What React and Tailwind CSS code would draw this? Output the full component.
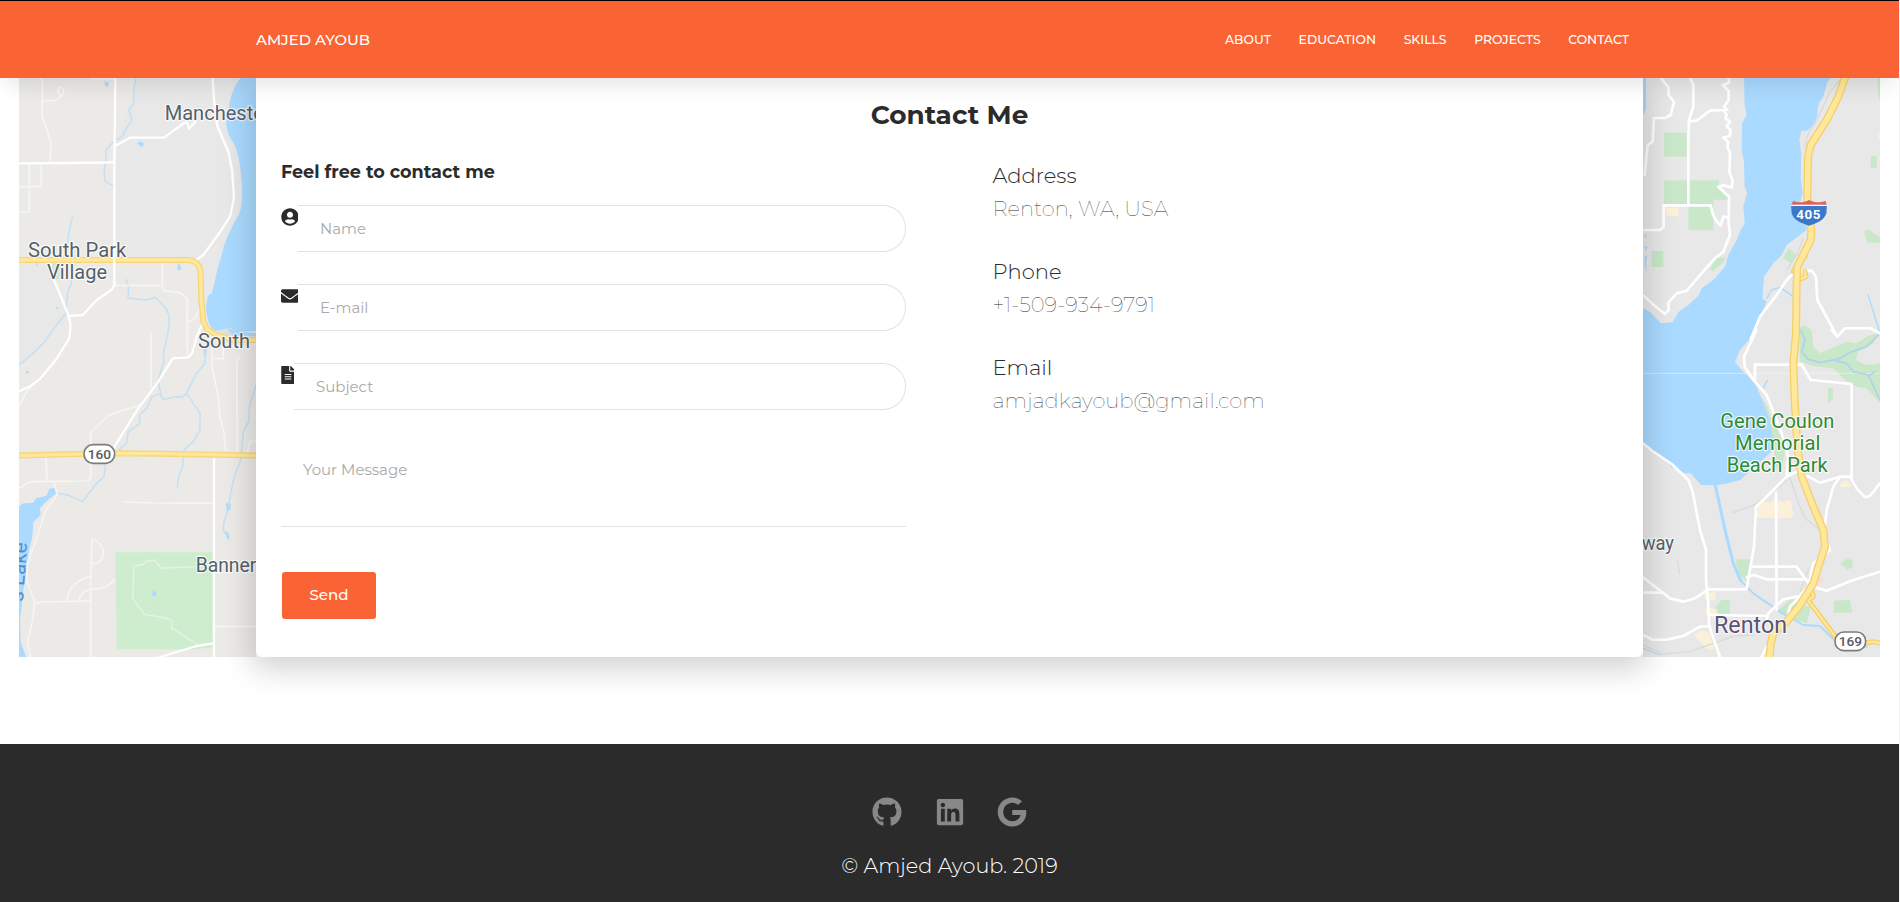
import { FaUserCircle, FaEnvelope, FaFileAlt, FaGithub, FaLinkedin, FaGoogle } from 'react-icons/fa';

const NAV = ['ABOUT', 'EDUCATION', 'SKILLS', 'PROJECTS', 'CONTACT'];

const DETAILS = [
  ['Address', 'Renton, WA, USA'],
  ['Phone', '+1-509-934-9791'],
  ['Email', 'amjadkayoub@gmail.com'],
];

const LAND = '#ebeae6';
const TOWN = '#e8e8e8';
const WATER = '#aadaff';
const PARK = '#c9e7c9';

function Roads({ paths, color = '#ffffff', width = 7 }) {
  return (
    <g fill="none" stroke={color} strokeWidth={width} strokeLinejoin="round" strokeLinecap="round">
      {paths.map((d) => (
        <path key={d} d={d} />
      ))}
    </g>
  );
}

function Highways({ paths, outer = '#f7d57b', width = 18 }) {
  return (
    <>
      <Roads paths={paths} color={outer} width={width} />
      <Roads paths={paths} color="#ffe899" width={width - 8} />
    </>
  );
}

function Label({ x, y, w, size = 62, color = '#56606b', children, ...rest }) {
  return (
    <text
      x={x}
      y={y}
      textLength={w}
      lengthAdjust="spacingAndGlyphs"
      fontSize={size}
      fontWeight="450"
      fill={color}
      stroke="#ffffff"
      strokeWidth="7"
      strokeOpacity="0.8"
      strokeLinejoin="round"
      paintOrder="stroke"
      fontFamily="Roboto, sans-serif"
      {...rest}
    >
      {children}
    </text>
  );
}

function RouteBadge({ x, y, children }) {
  return (
    <g>
      <rect x={x - 46} y={y - 28} width="92" height="56" rx="27" fill="#ffffff" stroke="#7d7d7d" strokeWidth="5" />
      <text x={x} y={y + 15} textAnchor="middle" fontFamily="Roboto, sans-serif" fontWeight="500" fontSize="41" fill="#5a5a5a">
        {children}
      </text>
    </g>
  );
}

function WestMap() {
  return (
    <svg className="block h-[579px] w-[237px] shrink-0" viewBox="57 234 711 1737" preserveAspectRatio="none">
      <rect x="57" y="234" width="711" height="1737" fill={LAND} />
      <path d="M408 234 L396 290 L380 340 L347 436 V770 H570 L600 785 L625 760 L768 620 V234Z" fill={TOWN} />
      <path d="M57 790 H150 L205 950 L140 1020 L57 1100Z" fill={TOWN} />
      <path d="M600 785 L640 760 L720 640 L640 850 L620 930 L625 985 L606 960Z" fill={TOWN} />
      <path d="M640 985 L700 985 L768 1000 V1016 H680Z" fill="#e0e0de" />
      <path d="M155 790 H185 L178 838 H163Z" fill="#cfe8cb" />
      <path d="M346 1657 H638 V1942 L590 1948 H350Z" fill="#ceedcf" />
      <path d="M722 234 C700 262 690 290 684 340 C672 370 682 400 698 425 C716 450 722 500 726 560 C728 610 722 640 710 655 C690 690 672 730 664 770 C650 810 646 840 636 878 L624 888 L618 920 C620 960 630 985 645 992 L690 984 L712 996 L768 992 V234Z" fill={WATER} />
      <path d="M680 985 L720 996 L768 1000 V1008 L700 1008Z" fill={WATER} />
      <path d="M57 1520 L70 1510 L100 1508 L108 1495 L140 1487 L148 1466 L163 1464 L168 1480 L138 1505 L120 1524 L122 1545 L100 1566 L97 1610 L85 1660 L82 1700 L70 1770 L60 1860 L62 1925 L78 1971 H57Z" fill={WATER} />
      <path d="M313 244 L326 248 L324 262 L316 258Z M411 430 L424 424 L432 432 L426 442Z M535 786 L545 808 L532 810Z M610 1040 L620 1048 L618 1072 L611 1062Z M678 1508 L692 1512 L690 1530 L680 1536Z M676 1594 L686 1600 L688 1620 L678 1612Z M460 1770 L470 1778 L464 1792 L456 1784Z M472 1800 L476 1812 L473 1810Z M78 1114 H86 V1120 H78Z M168 920 L176 926 L170 928Z M106 790 H112 V802Z" fill={WATER} />
      <Roads
        color="#c3e0f5"
        width={4.5}
        paths={[
          'M408 236 L401 270 L402 310 L386 330 L396 360 L376 390 L366 412 L345 420 L318 450 L317 490 L312 515 L316 545 L345 560',
          'M217 652 L206 700 L200 760 L218 800 L214 850 L202 880 L198 940 L165 980 L135 1025 L100 1060 L57 1095',
          'M377 838 L386 860 L384 895 L440 900 L466 892 L498 925 L508 950 L504 1000 L490 1060 L492 1085 L474 1140 L482 1180 L456 1190 L440 1225 L418 1245 L420 1270 L385 1295 L380 1328 L356 1350',
          'M480 1182 L490 1198 L530 1190 L545 1192 L560 1180 L600 1240 L600 1290 L580 1325 L552 1350 L548 1400 L536 1430 L532 1460',
          'M560 1178 L590 1120 L615 1090 L614 1040',
          'M768 1155 L748 1220 L746 1265 L730 1295 L722 1380 L703 1430 L690 1490 L684 1530 L672 1565 L670 1590 L682 1610',
          'M317 1395 L312 1430 L290 1450 L248 1504 L200 1484 L170 1480',
        ]}
      />
      <Roads
        color="#f6f5f3"
        width={5}
        paths={[
          'M122 234 L128 248 L126 350 L143 395 L154 432 L149 487',
          'M126 302 H168 L188 284 C198 262 172 252 174 275 L184 290',
          'M88 490 L88 636 H57',
          'M124 490 V560 H57',
          'M272 236 H345',
          'M487 790 V856 H345',
          'M487 856 L492 872 L540 878 L562 896 V1062',
          'M562 968 L585 955 L600 925',
          'M453 1000 V1162',
          'M420 1215 L326 1246 L295 1275 L272 1298 V1435 L262 1443 L90 1445 L57 1465',
          'M138 1370 L141 1443',
          'M57 1218 L80 1175 L94 1160',
          'M163 1447 L172 1485 L138 1530 L108 1620 L82 1690 L80 1740 L104 1805 L98 1860 L82 1930 L92 1971',
          'M104 1806 L114 1810 L118 1806 L270 1803',
          'M276 1620 L272 1730 L272 1971',
          'M276 1617 C300 1625 312 1645 310 1662 C306 1685 292 1693 276 1690',
          'M202 1803 C200 1770 230 1738 275 1728',
          'M236 1803 C240 1775 262 1764 300 1766 C325 1758 338 1748 346 1738',
          'M376 1506 L460 1509 L636 1510',
          'M636 1020 V1100 L655 1190 L660 1250 L672 1300 L677 1350',
          'M636 1075 L670 1076 V1040 H740',
          'M720 1072 L710 1078 L712 1356',
          'M742 1358 L750 1324 H768',
          'M642 1880 H768',
        ]}
      />
      <Roads
        color="#e3f3e2"
        width={4.5}
        paths={['M582 1700 L484 1705 L464 1681 L440 1684 L430 1693 L402 1698 L398 1795 L432 1843 L494 1853 L515 1860 L515 1884 L560 1912 L590 1932']}
      />
      <Roads
        paths={[
          'M346 234 L343 490 V855 L334 870 L290 900 L248 945 L208 948',
          'M57 490 L210 489 L343 487',
          'M345 438 L390 413 H492 L552 369 L562 368 L567 386 L586 366',
          'M638 234 L642 300 L652 378 L685 455 L696 510 L702 594 L690 650 L664 690 L610 765 L585 782',
          'M150 785 L158 830 L205 945 L212 975 L208 1015 L170 1076 L122 1135 L92 1158 L57 1174',
          'M610 965 L590 1010 L577 1058 L565 1072 L518 1075 L475 1145 L415 1225 L340 1345',
          'M642 1366 V1971',
          'M638 1930 L590 1938 L480 1971',
        ]}
      />
      <Highways
        paths={['M50 780 H345 H560 C585 782 600 790 602 820 L604 900 L610 965 L622 988 L650 1006 L700 1020 L768 1020', 'M50 1367 L200 1363 L350 1360 L480 1361 L640 1364 L780 1367']}
      />
      <Roads color="#ffffff" width={6} paths={['M343 765 V800']} />
      <RouteBadge x={298} y={1362}>160</RouteBadge>
      <Label x={494} y={360} w={318}>Manchester</Label>
      <Label x={84} y={770} w={295}>South Park</Label>
      <Label x={141} y={837} w={180}>Village</Label>
      <Label x={594} y={1043} w={156}>South</Label>
      <Label x={587} y={1717} w={182}>Banner</Label>
      <text transform="translate(69 1806) rotate(-86)" textLength="178" lengthAdjust="spacingAndGlyphs" fontFamily="Roboto, sans-serif" fontSize="58" fill="#4f8fd0">
        s Lake
      </text>
    </svg>
  );
}

function EastMap() {
  return (
    <svg className="block h-[579px] w-[237px] shrink-0" viewBox="129 234 711 1737" preserveAspectRatio="none">
      <rect x="129" y="234" width="711" height="1737" fill={TOWN} />
      <path d="M432 234 L434 315 L440 345 L426 370 L425 455 L432 480 L434 560 L442 578 L430 620 L434 670 L422 690 L410 720 L385 765 L375 800 L340 840 L305 865 L297 885 L262 918 L236 935 L218 967 L183 970 L150 935 L129 925 V1326 L160 1355 L195 1375 L215 1402 L255 1420 L272 1420 L303 1455 L345 1456 L375 1452 L420 1440 L470 1395 L520 1350 L522 1290 L505 1230 L485 1195 L465 1150 L425 1110 L405 1085 L420 1050 L452 1015 L480 950 L500 905 L487 895 L492 830 L520 790 L545 765 L560 735 L600 705 L620 690 L615 650 L600 610 L608 580 L602 530 L604 460 L598 420 L604 392 L620 392 L648 370 L656 310 L670 290 L682 245 L694 234Z" fill={WATER} />
      <path d="M129 234 H138 V325 L132 342 H129Z" fill={WATER} />
      <path d="M134 700 L142 712 H134Z M134 738 L144 740 L136 754Z M134 770 L142 766 L138 790 L140 815 L134 800Z" fill={WATER} />
      <g fill={PARK}>
        <path d="M192 398 H260 V470 H192Z M192 541 H356 V566 L384 590 V599 H340 V690 H265 V612 H192Z M154 753 H190 V801 H154Z M345 775 L377 772 L368 790 L340 812 L330 810Z M566 745 L592 765 L574 791 L549 773Z M812 468 H830 V504 H812Z M832 234 H840 V305 L833 280Z M792 695 L808 688 L820 700 L840 712 V728 H803Z" />
        <path d="M598 985 L612 975 L635 990 L640 1040 L660 1060 L740 1025 L770 1030 L800 1010 L830 1000 L820 1030 L775 1055 L768 1080 L800 1095 L840 1090 V1208 L800 1165 L770 1160 L735 1140 L700 1105 L640 1098 L600 1085Z" />
        <path d="M684 1163 H698 V1200 L684 1208Z M485 1195 L505 1225 L512 1260 L545 1310 L555 1350 L545 1410 L525 1400 L522 1330 L508 1260Z M408 1678 H454 L440 1745 L412 1715Z M345 1825 L365 1800 H390 V1848 L355 1840Z M530 1835 L575 1795 L600 1815 L632 1820 L620 1870 L560 1850Z M720 1690 L740 1676 L758 1680 V1700 L742 1709Z M702 1802 L750 1800 L757 1838 H702Z" />
      </g>
      <g fill="#fbf1d8">
        <path d="M195 623 H236 V650 L202 646Z M470 1550 L478 1500 L510 1508 L522 1498 L545 1505 L572 1500 L580 1545 L570 1554 H475Z M720 1452 L738 1440 L755 1455 L748 1462 L722 1460Z M312 1780 L345 1775 L348 1800 L315 1798Z M315 1820 L350 1828 L352 1850 L318 1845Z M282 1905 L300 1890 L325 1895 L345 1948 L320 1948Z M832 410 L840 400 V425Z" />
      </g>
      <path d="M650 1738 L668 1730 L674 1742 L658 1752Z" fill="#f8dada" />
      <Roads color="#dadada" width={4} paths={['M720 240 L690 275 L655 350 L625 400 L614 440', 'M610 715 L590 765 L560 810', 'M398 1538 L460 1516 L525 1470 L560 1440', 'M570 1435 L600 1520 L615 1555 L660 1590', 'M129 1935 L190 1962 L270 1955 L340 1930 L400 1908 L460 1905', 'M600 1775 L625 1710', 'M233 1680 L238 1720']} />
      <path d="M129 1120 H840" stroke="#ffffff" strokeOpacity="0.35" strokeWidth="4" />
      <Roads color={WATER} width={4} paths={['M500 895 L515 870 L540 862 L580 890', 'M804 884 L840 1000', 'M502 1142 L486 1170', 'M129 1945 L180 1965']} />
      <Roads color={WATER} width={9} paths={['M345 1452 L375 1590 L400 1690 L422 1742']} />
      <Roads color={WATER} width={6} paths={['M422 1742 L460 1780 L540 1835 L610 1875 L660 1878 L690 1908 L720 1935 L800 1940']} />
      <Roads color="#aed2ee" width={5} paths={['M602 990 L615 1020 L605 1055 L625 1078 L660 1088 L720 1075 L745 1060 L770 1050 L800 1040 L840 1000', 'M700 1080 L740 1090 L760 1115 L805 1125 L840 1200', 'M805 1130 L825 1115']} />
      <Roads
        width={8}
        paths={[
          'M183 234 L205 262 L206 285 L222 306 L212 345 L196 354 H162 L158 425 L143 435 L134 525',
          'M270 234 L280 255 V320 L267 360 L265 430 V616',
          'M386 234 L387 248 L368 256 L386 272 L386 300 L372 320 L382 330 L330 332 L290 362 L268 364',
          'M372 332 L380 345 L376 355 L390 365 L380 378 L391 390 L390 408 L370 413 L385 425 L382 440 L390 460 L388 515 L397 540 L396 562 L372 556 L355 560 L387 590 L386 670 L390 704 L370 755 L345 775 L315 808 L260 872 L230 880 L205 908 L206 930 L195 942 L165 918 L129 886',
          'M129 690 H180 L191 680 V616 H332 L338 642 L350 665 L362 676 L370 650 L384 652',
          'M129 1330 L160 1355 L215 1392 L265 1440 L278 1475 L300 1590 L318 1650 V1740 L324 1800 L328 1880 L360 1971',
          'M129 1732 L210 1795 L250 1805 L285 1795 L325 1768 H438',
          'M129 1778 H190',
          'M129 1905 L160 1920 L200 1919 L250 1908 L300 1880 L330 1878',
          'M328 1845 L500 1848',
          'M465 1094 H605 L632 1140 L755 1152 V1440',
          'M465 1094 V1140',
          'M470 990 L432 1070 L434 1100 L462 1142 L500 1185 L545 1300 L565 1370 L560 1430 L520 1470 L468 1520 L462 1640 L440 1765',
          'M528 1478 L530 1830',
          'M450 1700 H590 L618 1740 L640 1760 L680 1772 L760 1740 L840 1715',
          'M440 1732 L462 1725 L500 1738 H618',
          'M452 1018 L480 950 L530 885 L560 840 L585 815 L635 812 L648 830 L652 900 L712 1010 L735 985 L810 984 L840 1000',
          'M695 990 L712 1010',
          'M560 1430 L590 1415 L625 1430 L660 1448 L720 1430 L750 1430 L770 1465 L795 1492 L810 1488 L840 1450',
          'M720 1430 L700 1460 L680 1530 L672 1600 L690 1650 L640 1690 L625 1760 L600 1788 L550 1798 L505 1840 L500 1860',
          'M600 1790 L570 1820 L560 1860',
          'M500 1940 L485 1971',
        ]}
      />
      <Highways
        outer="#f5cf6e"
        width={15}
        paths={['M620 1795 L710 1915 L760 1935 L820 1925 L845 1930', 'M625 1800 L640 1790 L632 1760', 'M580 815 L600 780 L615 770', 'M595 840 L618 830 L615 815']}
      />
      <Highways
        outer="#f5cf6e"
        width={24}
        paths={['M738 225 L715 290 L680 360 L632 435 L624 470 L622 600 L624 640 L634 690 L632 720 L592 800 L590 850 L588 1000 L580 1090 L584 1200 L592 1340 L605 1430 L640 1520 L670 1590 L675 1640 L655 1700 L640 1750 L600 1815 L560 1865 L520 1900 L512 1930 L508 1985']}
      />
      <g>
        <path d="M573 614 H681 L679 640 C672 662 650 670 627 677 C604 670 580 660 575 640Z" fill="#3a78c9" />
        <path d="M580 602 C596 610 612 608 627 600 C644 608 660 610 676 602 L681 616 H573Z" fill="#dc6460" />
        <path d="M573 616 H681" stroke="#ffffff" strokeWidth="4" />
        <text x="625" y="657" textAnchor="middle" textLength="72" fontFamily="Roboto, sans-serif" fontWeight="700" fontSize="40" fill="#ffffff">
          405
        </text>
      </g>
      <RouteBadge x={751} y={1924}>169</RouteBadge>
      <Label x={361} y={1283} w={342} color="#2f8a35">Gene Coulon</Label>
      <Label x={405} y={1350} w={256} color="#2f8a35">Memorial</Label>
      <Label x={380} y={1417} w={303} color="#2f8a35">Beach Park</Label>
      <Label x={125} y={1650} w={97}>way</Label>
      <Label x={342} y={1899} w={219} size={70} color="#5c5470">Renton</Label>
    </svg>
  );
}

function Field({ icon, iconClass, placeholder }) {
  return (
    <div className="flex h-[47px] items-start">
      <span className={iconClass}>{icon}</span>
      <input
        placeholder={placeholder}
        className="h-full min-w-0 flex-1 rounded-r-[23px] border border-l-0 border-[#e1e1e1] bg-white pl-[22px] text-[15px] outline-none placeholder:text-[#aaaaaa]"
      />
    </div>
  );
}

export default function App() {
  return (
    <div className="flex h-[902px] w-[1900px] flex-col overflow-hidden border-r border-[#f1f1f1] bg-white font-['Montserrat',sans-serif] text-[#2b2b2b]">
      <header className="relative z-20 flex h-[78px] shrink-0 items-center justify-between border-t border-black bg-[#fa6333] pt-[2px] pr-[270px] pl-[256px] text-white shadow-[0_12px_22px_-6px_rgba(0,0,0,0.11)]">
        <a className="text-[14.9px] font-medium">AMJED AYOUB</a>
        <nav className="flex gap-[27.6px] text-[12.45px] font-medium">
          {NAV.map((item) => (
            <a key={item}>{item}</a>
          ))}
        </nav>
      </header>

      <main className="flex h-[579px] shrink-0 pl-[19px]">
        <WestMap />
        <section className="relative z-10 w-[1387px] shrink-0 rounded-b-[6px] bg-white pt-[21px] pl-[25px] shadow-[0_8px_30px_4px_rgba(0,0,0,0.18)]">
          <h2 className="pr-[25px] text-center text-[26.3px] leading-8 font-bold">Contact Me</h2>
          <div className="mt-7 flex">
            <form className="flex w-[625px] flex-col">
              <h3 className="text-[17.6px] leading-[25px] font-bold">Feel free to contact me</h3>
              <div className="mt-[21px] flex flex-col gap-8">
                <Field icon={<FaUserCircle size={18} />} iconClass="mt-[3px] w-[17px]" placeholder="Name" />
                <Field icon={<FaEnvelope size={18} />} iconClass="mt-[3px] w-[17px]" placeholder="E-mail" />
                <Field icon={<FaFileAlt size={18} className="-ml-[2px]" />} iconClass="mt-[3px] w-[13px]" placeholder="Subject" />
                <textarea
                  placeholder="Your Message"
                  className="block h-[85px] resize-none border-b border-[#e1e1e1] px-[22px] pt-4 text-[15px] leading-[23px] outline-none placeholder:text-[#aaaaaa]"
                />
              </div>
              <button type="button" className="mt-[45px] ml-px h-[47px] w-[94px] rounded-[3px] bg-[#fa6333] text-[15px] font-medium text-white">
                Send
              </button>
            </form>
            <dl className="ml-[86.5px] flex flex-col gap-[30px] text-[21.1px] leading-[33px]">
              {DETAILS.map(([term, value]) => (
                <div key={term}>
                  <dt className="font-light">{term}</dt>
                  <dd className="font-thin">{value}</dd>
                </div>
              ))}
            </dl>
          </div>
        </section>
        <EastMap />
      </main>

      <footer className="mt-[87px] flex h-[158px] shrink-0 flex-col items-center bg-[#2b2b2b] pt-[53px]">
        <div className="flex gap-[32.5px] text-[30px] text-[#888888]">
          <FaGithub />
          <FaLinkedin />
          <FaGoogle />
        </div>
        <p className="mt-[23px] text-[20.8px] leading-8 font-light text-white">© Amjed Ayoub. 2019</p>
      </footer>
    </div>
  );
}
